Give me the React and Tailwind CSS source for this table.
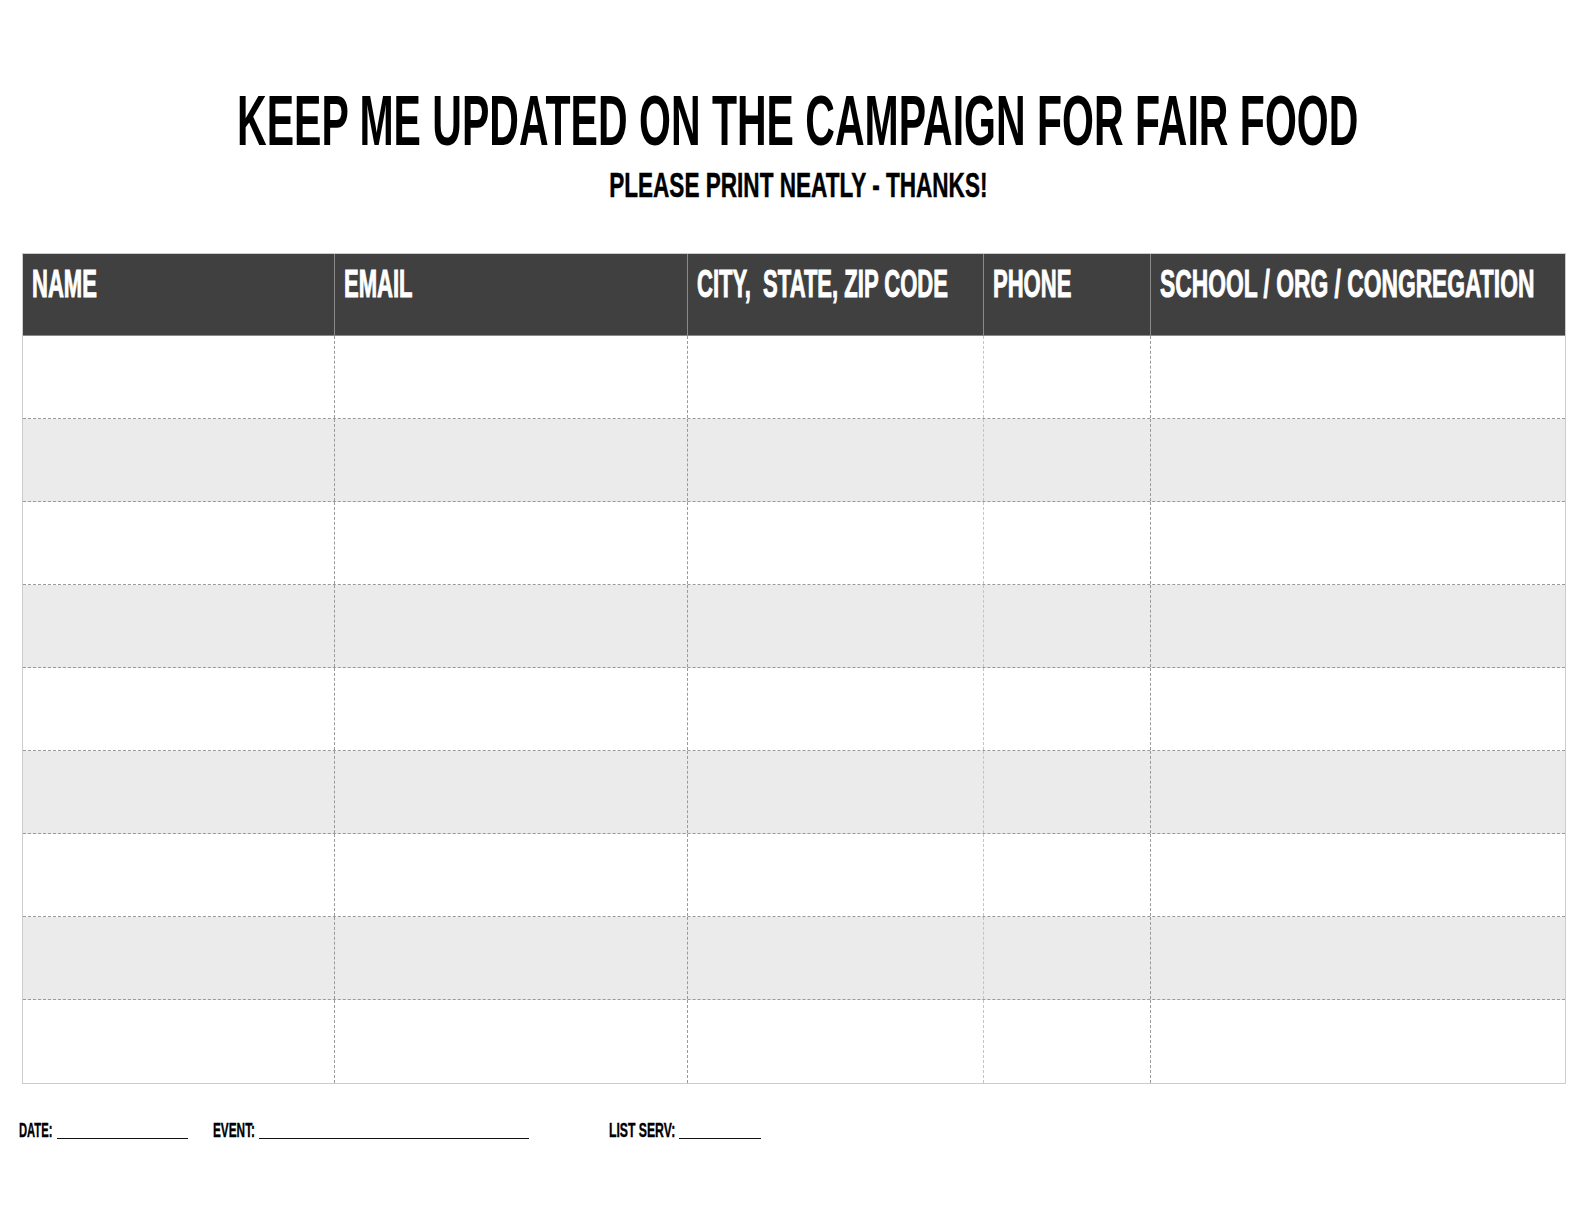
import React from 'react';

const columns = [
  { label: 'NAME', width: 'w-[312px]', scale: 'scale-x-[0.565]' },
  { label: 'EMAIL', width: 'w-[353px]', scale: 'scale-x-[0.565]' },
  { label: 'CITY,  STATE, ZIP CODE', width: 'w-[296px]', scale: 'scale-x-[0.565]' },
  { label: 'PHONE', width: 'w-[167px]', scale: 'scale-x-[0.565]' },
  { label: 'SCHOOL / ORG / CONGREGATION', width: 'flex-1', scale: 'scale-x-[0.585]' },
];

const rows = [0, 1, 2, 3, 4, 5, 6, 7, 8];

const font = { fontFamily: '"Liberation Sans", Arial, sans-serif' };

// No condensed face is installed, so squeeze the text horizontally.
const Squeeze = ({ w, scale, children }) => (
  <span className={`inline-block ${w}`}>
    <span className={`inline-block whitespace-pre origin-left ${scale}`}>{children}</span>
  </span>
);

const App = () => {
  return (
    <div className="w-[1596px] min-h-[1222px] bg-white text-black overflow-hidden" style={font}>
      {/* Heading */}
      <div className="pt-[86px]">
        <div className="flex justify-center h-[70px]">
          <span className="inline-block shrink-0 whitespace-pre origin-center scale-x-[0.586] text-[70px] leading-[70px] font-bold">
            KEEP ME UPDATED ON THE CAMPAIGN FOR FAIR FOOD
          </span>
        </div>
        <div className="flex justify-center h-[35px] mt-[11px]">
          <span className="inline-block shrink-0 whitespace-pre origin-center scale-x-[0.645] text-[35px] leading-[35px] font-bold [-webkit-text-stroke:0.5px_#000000]">
            PLEASE PRINT NEATLY - THANKS!
          </span>
        </div>
      </div>

      {/* Sign-up table */}
      <div className="mt-[51px] ml-[22px] w-[1544px] border border-[#cccccc]">
        <div className="flex h-[82px] bg-[#404040] border-b border-[#8a8a8a]">
          {columns.map((col, i) => (
            <div
              key={col.label}
              className={`${col.width} shrink-0 h-full pl-[9px] pt-[10px] overflow-visible ${i < columns.length - 1 ? 'border-r border-[#8a8a8a]' : ''}`}
            >
              <span className={`inline-block whitespace-pre origin-left ${col.scale} text-white font-bold text-[39px] leading-[39px] [-webkit-text-stroke:1px_#ffffff]`}>
                {col.label}
              </span>
            </div>
          ))}
        </div>
        {rows.map(r => (
          <div
            key={r}
            className={`flex h-[83px] ${r < rows.length - 1 ? 'border-b border-dashed border-[#9a9a9a]' : ''} ${r % 2 === 1 ? 'bg-[#ebebeb]' : 'bg-white'}`}
          >
            {columns.map((col, i) => (
              <div
                key={col.label}
                className={`${col.width} shrink-0 h-full ${i < columns.length - 1 ? 'border-r border-dashed' : ''} ${i === 2 ? 'border-[#c4c4c4]' : 'border-[#9a9a9a]'}`}
              />
            ))}
          </div>
        ))}
      </div>

      {/* Footer fields */}
      <div className="mt-[36px] pl-[19px] whitespace-nowrap text-[20px] leading-[20px] font-bold [-webkit-text-stroke:0.4px_#000000]">
        <Squeeze w="w-[38px]" scale="scale-x-[0.56]">DATE:</Squeeze>
        <span className="inline-block w-[131px] border-b border-[#111111] translate-y-[2px]" />
        <span className="inline-block w-[25px]" />
        <Squeeze w="w-[46px]" scale="scale-x-[0.59]">EVENT:</Squeeze>
        <span className="inline-block w-[270px] border-b border-[#111111] translate-y-[2px]" />
        <span className="inline-block w-[80px]" />
        <Squeeze w="w-[70px]" scale="scale-x-[0.61]">LIST SERV:</Squeeze>
        <span className="inline-block w-[82px] border-b border-[#111111] translate-y-[2px]" />
      </div>
    </div>
  );
};

export default App;
